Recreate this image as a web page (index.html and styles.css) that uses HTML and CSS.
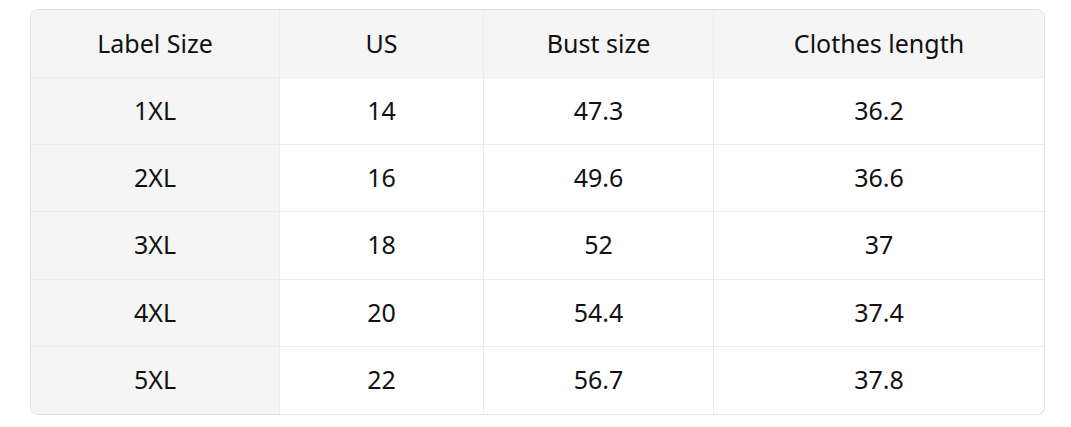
FILE: index.html
```html
<!DOCTYPE html>
<html>
<head>
<meta charset="utf-8">
<link rel="stylesheet" href="styles.css">
</head>
<body>
<div class="wrap">
<table class="sizes">
<colgroup><col class="c1"><col class="c2"><col class="c3"><col class="c4"></colgroup>
<thead>
<tr><th>Label Size</th><th>US</th><th>Bust size</th><th>Clothes length</th></tr>
</thead>
<tbody>
<tr><td>1XL</td><td>14</td><td>47.3</td><td>36.2</td></tr>
<tr><td>2XL</td><td>16</td><td>49.6</td><td>36.6</td></tr>
<tr><td>3XL</td><td>18</td><td>52</td><td>37</td></tr>
<tr><td>4XL</td><td>20</td><td>54.4</td><td>37.4</td></tr>
<tr><td>5XL</td><td>22</td><td>56.7</td><td>37.8</td></tr>
</tbody>
</table>
</div>
</body>
</html>
```
FILE: styles.css
```css
html, body { margin: 0; padding: 0; background: #fff; }
body { font-family: "Noto Sans", "Open Sans", sans-serif; color: #111; }
.wrap {
  margin: 9px 0 0 30px;
  width: 1013px;
  border: 1px solid #e2e2e2;
  border-radius: 8px;
  overflow: hidden;
}
.sizes {
  width: 100%;
  border-collapse: separate;
  border-spacing: 0;
  table-layout: fixed;
}
.c1 { width: 249px; }
.c2 { width: 204px; }
.c3 { width: 230px; }
.sizes th, .sizes td {
  height: 67.2px;
  padding: 0 0 2px;
  text-align: center;
  vertical-align: middle;
  font-size: 25px;
  font-weight: 400;
  border-right: 1px solid #ececec;
  border-bottom: 1px solid #ececec;
  box-sizing: border-box;
}
.sizes thead th { height: 68px; }
.sizes th:last-child, .sizes td:last-child { border-right: none; }
.sizes tbody tr:last-child td { border-bottom: none; }
.sizes th { background: #f5f5f5; }
.sizes td:first-child { background: #f5f5f5; }
```
